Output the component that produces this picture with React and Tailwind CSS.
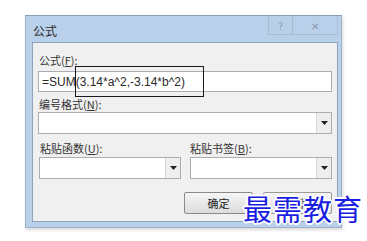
import React from 'react'

const font = { fontFamily: '"Noto Sans CJK SC", "Liberation Sans", sans-serif' }

function Combo({ className = '' }) {
  return (
    <div className={`flex h-[22px] border border-[#abadb3] bg-white ${className}`}>
      <div className="flex-1" />
      <div className="flex w-[15px] items-center justify-center border-l border-[#d8d8d8] bg-[#eeeeee]">
        <svg width="7" height="4" viewBox="0 0 7 4">
          <path d="M0 0h7L3.5 4z" fill="#222" />
        </svg>
      </div>
    </div>
  )
}

function App() {
  return (
    <div className="relative h-[241px] w-[367px] overflow-hidden bg-white text-[11px] text-[#333]" style={font}>
      {/* Dialog frame */}
      <div className="ml-[25px] mt-[15px] flex h-[213px] w-[317px] flex-col border border-[#9db1ca] border-t-[#8a9cb2] bg-[#b9d0ea] pb-[5px] pl-[6px] pr-[3px] shadow-[1px_2px_3px_rgba(0,0,0,0.15)]">
        {/* Title bar */}
        <div className="flex h-[26px] items-start">
          <div className="pl-[1px] pt-[8px] text-[12px] leading-[14px] text-[#2a2a2a]">公式</div>
          <div className="ml-auto flex h-[19px]">
            <div className="flex w-[25px] items-center justify-center border border-t-0 border-[#a8bdd6] text-[10px] text-[#8a9aaa]">?</div>
            <div className="flex w-[45px] items-center justify-center border border-l-0 border-t-0 border-[#a8bdd6] text-[10px] text-[#8a9aaa]">✕</div>
          </div>
        </div>

        {/* Panel */}
        <div className="flex flex-1 flex-col border border-[#8ea3bd] bg-[#f0f0f0] px-[5px]">
          <div className="mt-[8px] h-[18px] pl-[1px] leading-[18px]">公式(<span className="underline">F</span>):</div>
          <div className="mt-[2px] flex h-[21px] items-center border border-[#abadb3] bg-white pl-[3px] text-[12px] text-[#2a2a2a]" style={{ fontFamily: '"Liberation Sans", sans-serif' }}>
            =SUM(3.14*a^2,-3.14*b^2)
          </div>
          <div className="mt-[4px] h-[16px] pl-[1px] leading-[16px]">编号格式(<span className="underline">N</span>):</div>
          <Combo />
          <div className="mt-[6px] flex h-[16px] leading-[16px]">
            <div className="w-[151px] pl-[2px]">粘贴函数(<span className="underline">U</span>):</div>
            <div className="pl-[1px]">粘贴书签(<span className="underline">B</span>):</div>
          </div>
          <div className="mt-[1px] flex gap-[9px] pl-[1px]">
            <Combo className="w-[142px]" />
            <Combo className="flex-1" />
          </div>
          <div className="mt-[13px] flex justify-end gap-[10px]">
            <div className="flex h-[22px] w-[69px] items-center justify-center rounded-[2px] border border-[#8b8b8b] bg-gradient-to-b from-[#f6f6f6] to-[#dcdcdc] text-[11px] text-[#222]">确定</div>
            <div className="flex h-[22px] w-[69px] items-center justify-center rounded-[2px] border border-[#9a9a9a] bg-gradient-to-b from-[#f6f6f6] to-[#dcdcdc] text-[11px] text-[#222]">取消</div>
          </div>
        </div>
      </div>

      {/* Highlight box over formula */}
      <div className="absolute left-[75px] top-[66px] h-[31px] w-[129px] border-[1.5px] border-[#1a1a1a]" />

      {/* Watermark */}
      <div
        className="absolute left-[243px] top-[191px] text-[29px] leading-[34px] tracking-[1px] text-[#1a1ee0]"
        style={{
          fontFamily: '"Noto Sans CJK SC", sans-serif',
          textShadow: '1px 1px 0 #fff, -1px -1px 0 #fff, 1px -1px 0 #fff, -1px 1px 0 #fff, 2px 0 0 #fff, -2px 0 0 #fff, 0 2px 0 #fff, 0 -2px 0 #fff',
        }}
      >
        最需教育
      </div>
    </div>
  )
}

export default App
